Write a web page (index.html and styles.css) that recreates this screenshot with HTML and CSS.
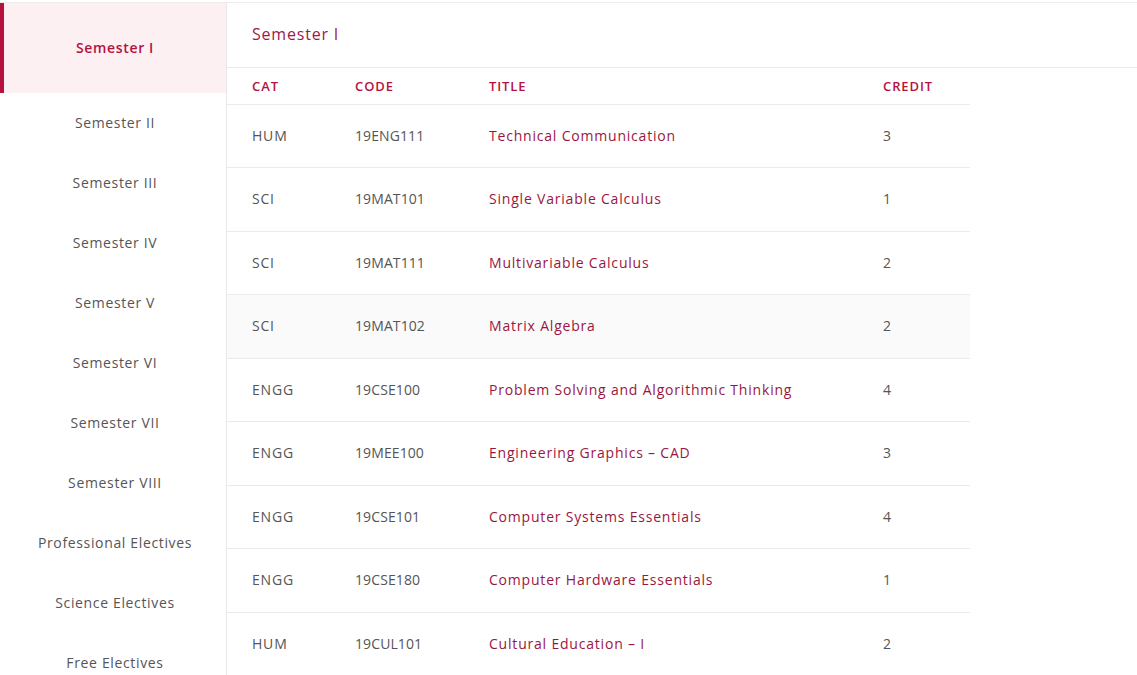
FILE: index.html
```html
<!DOCTYPE html>
<html lang="en">
<head>
<meta charset="utf-8">
<title>Curriculum</title>
<link rel="stylesheet" href="styles.css">
</head>
<body>
<div class="layout">
  <nav class="sidebar">
    <a class="tab active">Semester I</a>
    <a class="tab">Semester II</a>
    <a class="tab">Semester III</a>
    <a class="tab">Semester IV</a>
    <a class="tab">Semester V</a>
    <a class="tab">Semester VI</a>
    <a class="tab">Semester VII</a>
    <a class="tab">Semester VIII</a>
    <a class="tab">Professional Electives</a>
    <a class="tab">Science Electives</a>
    <a class="tab">Free Electives</a>
  </nav>
  <main class="content">
    <h2 class="pane-title">Semester I</h2>
    <table class="courses">
      <colgroup>
        <col class="c-cat"><col class="c-code"><col class="c-title"><col class="c-credit">
      </colgroup>
      <thead>
        <tr><th>CAT</th><th>CODE</th><th>TITLE</th><th>CREDIT</th></tr>
      </thead>
      <tbody>
        <tr><td>HUM</td><td class="code">19ENG111</td><td class="title">Technical Communication</td><td>3</td></tr>
        <tr><td>SCI</td><td class="code">19MAT101</td><td class="title">Single Variable Calculus</td><td>1</td></tr>
        <tr><td>SCI</td><td class="code">19MAT111</td><td class="title">Multivariable Calculus</td><td>2</td></tr>
        <tr class="hover"><td>SCI</td><td class="code">19MAT102</td><td class="title">Matrix Algebra</td><td>2</td></tr>
        <tr><td>ENGG</td><td class="code">19CSE100</td><td class="title">Problem Solving and Algorithmic Thinking</td><td>4</td></tr>
        <tr><td>ENGG</td><td class="code">19MEE100</td><td class="title">Engineering Graphics – CAD</td><td>3</td></tr>
        <tr><td>ENGG</td><td class="code">19CSE101</td><td class="title">Computer Systems Essentials</td><td>4</td></tr>
        <tr><td>ENGG</td><td class="code">19CSE180</td><td class="title">Computer Hardware Essentials</td><td>1</td></tr>
        <tr><td>HUM</td><td class="code">19CUL101</td><td class="title">Cultural Education – I</td><td>2</td></tr>
      </tbody>
    </table>
  </main>
</div>
</body>
</html>
```
FILE: styles.css
```css
* { box-sizing: border-box; }
html, body { margin: 0; padding: 0; background: #fff; }
body {
  font-family: "Open Sans", "Liberation Sans", sans-serif;
  color: #555;
  font-size: 14px;
  overflow: hidden;
  height: 675px;
}
.layout {
  display: flex;
  margin-top: 2px;
  border-top: 1px solid #ececec;
  height: 673px;
}
.sidebar {
  width: 227px;
  flex: none;
  border-right: 1px solid #e8e8e8;
  display: flex;
  flex-direction: column;
}
.tab {
  height: 60px;
  flex: none;
  display: flex;
  align-items: center;
  justify-content: center;
  padding: 0 0 1px 4px;
  color: #555;
  font-size: 14px;
  letter-spacing: 0.65px;
}
.tab.active {
  height: 90px;
  background: #fcf0f3;
  border-left: 4px solid #b5123f;
  padding-left: 0;
  color: #b5123f;
  font-weight: 600;
}
.content { flex: 1; min-width: 0; }
.pane-title {
  margin: 0;
  height: 65px;
  padding: 0 25px 2px;
  display: flex;
  align-items: center;
  font-size: 16px;
  font-weight: 400;
  color: #a0174a;
  letter-spacing: 0.8px;
  border-bottom: 1px solid #ebebeb;
}
.courses {
  width: 743px;
  border-collapse: collapse;
  table-layout: fixed;
}
.c-cat { width: 103px; }
.c-code { width: 134px; }
.c-title { width: 394px; }
.c-credit { width: 112px; }
.courses th {
  height: 36px;
  text-align: left;
  padding: 0 0 0 25px;
  font-size: 13px;
  font-weight: 600;
  color: #b5123f;
  letter-spacing: 0.9px;
  border-bottom: 1px solid #ebebeb;
}
.courses td {
  height: 63.5px;
  padding: 0 0 1px 25px;
  border-bottom: 1px solid #ebebeb;
  font-size: 14px;
  letter-spacing: 0.8px;
  color: #555;
  white-space: nowrap;
}
.courses td.code { letter-spacing: 0.1px; }
.courses td.title { color: #9a1642; }
.courses tr.hover td { background: #fafafa; }
```
